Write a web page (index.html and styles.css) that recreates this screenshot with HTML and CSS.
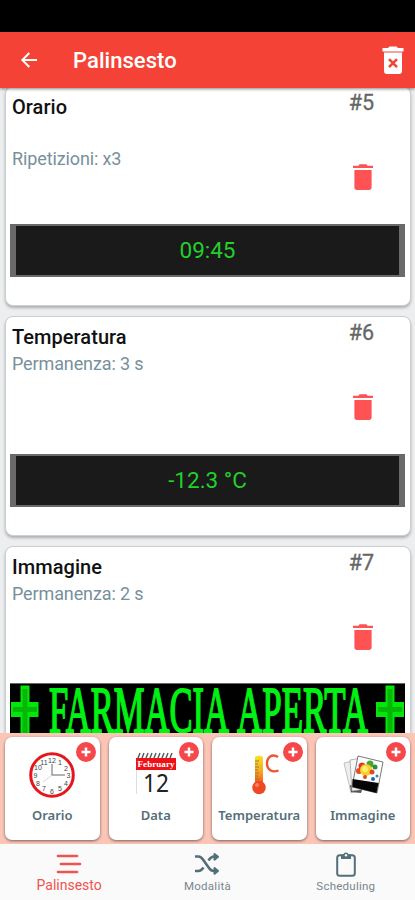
FILE: index.html
```html
<!DOCTYPE html>
<html lang="it">
<head>
<meta charset="utf-8">
<title>Palinsesto</title>
<link rel="stylesheet" href="styles.css">
</head>
<body>
<svg class="defs" width="0" height="0">
  <symbol id="trash" viewBox="0 0 20 26"><path d="M0 1.800h5.400L6.600.3h6.800l1.200 1.500H20V4H0zM1.400 6h17.200v17.200a2.700 2.700 0 0 1-2.700 2.700H4.100a2.700 2.700 0 0 1-2.700-2.700z" fill="currentColor"/></symbol>
  <symbol id="plus" viewBox="0 0 20 20"><circle cx="10" cy="10" r="10" fill="#f4484a"/><path d="M10 5.5v9M5.5 10h9" stroke="#fff" stroke-width="2.500"/></symbol>
</svg>
<div class="app">
  <div class="status"></div>
  <header class="bar">
    <svg class="back" viewBox="0 0 16 16"><path d="M16 8H2M8.3 1 1.3 8l7 7" fill="none" stroke="#fff" stroke-width="2"/></svg>
    <h1>Palinsesto</h1>
    <svg class="clear" viewBox="0 0 22 28"><path d="M.5 2H6L7.500.5h7L16 2h5.500v3.400H.5zM2 6.500h18V25a3 3 0 0 1-3 3H5a3 3 0 0 1-3-3z" fill="#fff"/><path d="m7 13.200 8 8m0-8-8 8" stroke="#f44336" stroke-width="2.600"/></svg>
  </header>
  <main class="list">
    <article class="card">
      <div class="info"><div class="text"><h2>Orario</h2><p></p><p>Ripetizioni: x3</p></div>
      <div class="side"><span>#5</span><svg class="trash"><use href="#trash"/></svg></div></div>
      <div class="display">09:45</div>
    </article>
    <article class="card">
      <div class="info"><div class="text"><h2>Temperatura</h2><p>Permanenza: 3 s</p></div>
      <div class="side"><span>#6</span><svg class="trash"><use href="#trash"/></svg></div></div>
      <div class="display">-12.3 °C</div>
    </article>
    <article class="card picture">
      <div class="info"><div class="text"><h2>Immagine</h2><p>Permanenza: 2 s</p></div>
      <div class="side"><span>#7</span><svg class="trash"><use href="#trash"/></svg></div></div>
      <svg class="banner" viewBox="0 0 395 53">
        <rect width="395" height="53" fill="#000"/><path d="M0 .5h395" stroke="#666"/>
        <g fill="#04e60b"><path d="M10.500 2.500h9V19h9v15h-9v19h-9V34H1V19h9.500z"/><path d="M375.500 2.500h9V19h9.500v15h-9.500v19h-9V34H366V19h9.500z"/></g>
        <path d="M3 26.500h24M368 26.500h24M15 6v46M380 6v46" stroke="#05b808" stroke-width="5"/>
        <text x="39" y="49" textLength="180" lengthAdjust="spacingAndGlyphs">FARMACIA</text>
        <text x="227" y="49" textLength="131" lengthAdjust="spacingAndGlyphs">APERTA</text>
      </svg>
    </article>
  </main>
  <section class="tools">
    <div class="tool"><svg class="plus"><use href="#plus"/></svg>
      <svg class="pic" viewBox="0 0 46 46"><circle cx="23" cy="23" r="21.300" fill="#fff" stroke="#e5171d" stroke-width="3"/>
        <g class="dial"><text x="23" y="11">12</text><text x="31" y="13">1</text><text x="37" y="18.500">2</text><text x="39.500" y="26">3</text><text x="37" y="34">4</text><text x="31" y="39">5</text><text x="23" y="42">6</text><text x="15" y="39">7</text><text x="9" y="34">8</text><text x="6.500" y="26">9</text><text x="9" y="18">10</text><text x="15" y="13">11</text></g>
        <path d="M23 12v11h13" fill="none" stroke="#666"/><path d="M23 23l-9 7" stroke="#bbb" stroke-width=".6"/></svg>
      <span>Orario</span></div>
    <div class="tool"><svg class="plus"><use href="#plus"/></svg>
      <svg class="pic" viewBox="0 0 46 46"><path d="M3.500 18v24" stroke="#ddd"/><path d="M3 6h40v12H3z" fill="#ee1218"/>
        <path d="M5 6l2-5m2 5 2-5m2 5 2-5m2 5 2-5m2 5 2-5m2 5 2-5m2 5 2-5m2 5 2-5m2 5 2-5" stroke="#555" stroke-width="1.400"/>
        <text class="month" x="23" y="14.500" textLength="37">February</text><text class="day" x="23" y="40" textLength="26" lengthAdjust="spacingAndGlyphs">12</text></svg>
      <span>Data</span></div>
    <div class="tool"><svg class="plus"><use href="#plus"/></svg>
      <svg class="pic" viewBox="0 0 46 46"><defs><linearGradient id="heat" x2="0" y2="1"><stop stop-color="#f6e52a"/><stop offset=".55" stop-color="#f5a623"/><stop offset="1" stop-color="#ee4a22"/></linearGradient></defs>
        <path d="M19 5q4-3 8 0v28h-8z" fill="url(#heat)"/><circle cx="23" cy="35.500" r="6.800" fill="#ee4922"/><circle cx="21" cy="33" r="2" fill="#f98258"/>
        <path d="M19 9h4m-4 3h3m-3 3h4m-4 3h3m-3 3h4m-4 3h3m-3 3h4" stroke="#a67a25" stroke-width="1.200"/>
        <path d="M42 5c-6-4-11 .5-11 6.500S36 21 42.500 18.500" fill="none" stroke="#ea5630" stroke-width="2.400"/></svg>
      <span>Temperatura</span></div>
    <div class="tool"><svg class="plus"><use href="#plus"/></svg>
      <svg class="pic" viewBox="0 0 46 46"><path d="m4 11 9-2 5 30-7 2z" fill="#eee" stroke="#aaa" stroke-width=".7"/><path d="m10 33 13 2-2 6-10-1z" fill="#555"/><path d="m10 8 12-2 4 31-14 2z" fill="#f6f6f6" stroke="#999" stroke-width=".7"/>
        <path d="m18 4 25 6-6 31-25-6z" fill="#fff" stroke="#555" stroke-width=".8"/><path d="m12.500 27 26 4-2 10-24-6z" fill="#050505"/>
        <circle cx="22" cy="14" r="3.500" fill="#df3826"/><circle cx="19" cy="19" r="3" fill="#e04a24"/><circle cx="30" cy="12" r="3.500" fill="#49a52d"/><circle cx="35" cy="15" r="2.500" fill="#2c8f3b"/><circle cx="26" cy="18" r="6" fill="#f8cf2c"/><circle cx="25" cy="17" r="3" fill="#fff06c"/><circle cx="32" cy="20" r="2.500" fill="#e3472b"/><circle cx="33" cy="27" r="2" fill="#2465b1"/><circle cx="37" cy="24" r="1.500" fill="#3b83c4"/><circle cx="25" cy="25" r="2" fill="#de4b2c"/></svg>
      <span>Immagine</span></div>
  </section>
  <nav class="nav">
    <a class="active"><svg viewBox="0 0 26 22"><path d="M2 3h19M5 11h19M2 19h19" stroke="currentColor" stroke-width="2.700" stroke-linecap="round"/></svg><span>Palinsesto</span></a>
    <a><svg viewBox="0 0 26 22"><path d="M1 3.500h3.500c2.500 0 3.500 1.600 5 3.800L15 15c1.300 2 2.500 3 5 3h2M1 18h3.500c2.500 0 3.500-1.300 5-3.500m5-7C16 5.200 17.300 3.500 20 3.500h2" fill="none" stroke="currentColor" stroke-width="2.600"/><path d="m20.500 1 3.500 2.800-3.500 2.900zm0 14 3.500 2.900-3.500 2.900z" fill="currentColor" stroke="currentColor" stroke-width="2" stroke-linejoin="round"/></svg><span>Modalità</span></a>
    <a><svg class="clip" viewBox="0 0 20 26"><rect x="1.200" y="4.300" width="17.600" height="20.400" rx="2.500" fill="none" stroke="currentColor" stroke-width="2"/><path d="M5 3.500h2.300a2.800 2.800 0 0 1 5.400 0H15V8H5z" fill="currentColor"/><circle cx="10" cy="4.300" r="1.200" fill="#fafafa"/></svg><span>Scheduling</span></a>
  </nav>
</div>
</body>
</html>
```
FILE: styles.css
```css
* { box-sizing: border-box; }
body { margin: 0; font-family: Roboto, sans-serif; background: #f0f2f3; }
h1, h2, p { margin: 0; }
.defs { position: absolute; }
.app { width: 415px; height: 900px; display: grid; grid-template-rows: 32px 56px 645px 111px 56px; overflow: hidden; }
.status { background: #000; }
.bar { background: #f44336; display: flex; align-items: center; padding: 0 12px 0 21px; box-shadow: 0 1px 3px #0007; z-index: 1; }
.back { width: 16px; height: 16px; }
.bar h1 { flex: 1; margin-left: 36px; color: #fff; font-size: 22px; font-weight: 500; letter-spacing: .05px; }
.clear { width: 22px; height: 28px; margin-right: -1px; }
.list { overflow: hidden; padding: 0 4px 0 5px; display: flex; flex-direction: column; gap: 10px; background: #eceeef; }
.card { flex: 0 0 220px; background: #fff; border: 1px solid #cdd0d1; border-radius: 8px; box-shadow: 0 2px 3px #0004; padding: 0 5px 0 4px; }
.card:first-child { margin-top: -2px; }
.info { height: 137px; display: flex; justify-content: space-between; }
.picture .info { height: 136px; }
.text { padding: 8px 0 0 2px; }
.text h2 { font-size: 20px; line-height: 25px; font-weight: 500; color: #111; letter-spacing: .05px; }
.text p { height: 25px; line-height: 27px; font-size: 18px; color: #78909c; letter-spacing: -.12px; }
.side { width: 84px; display: flex; flex-direction: column; align-items: center; color: #666; font-size: 21.500px; }
.side span { line-height: 26px; margin: 3px 3px 0 0; -webkit-text-stroke: .3px #666; }
.trash { width: 20px; height: 26px; margin-top: 48px; color: #ff5252; }
.display { height: 53px; background: #1a1a1a; border: solid #6a6a6a; border-width: 2px 6px; color: #23cf2b; font-size: 22.500px; line-height: 49px; text-align: center; }
.banner { display: block; width: 395px; height: 53px; }
.banner text { font: 65px "Liberation Serif", serif; fill: #00f313; stroke: #00f313; stroke-width: 1.800px; }
.tools { background: #fcc6b7; padding: 4px 5px; display: grid; grid-template-columns: repeat(4, 94.500px); gap: 9px; }
.tool { position: relative; background: #fff; border-radius: 7px; box-shadow: 0 1px 3px #0008; display: flex; flex-direction: column; align-items: center; padding-top: 15px; }
.plus { position: absolute; right: 4px; top: 5px; width: 20px; height: 20px; }
.pic { width: 46px; height: 46px; }
.tool span { margin-top: 8px; font: 600 13px/18px "Noto Sans", sans-serif; color: #546e7a; }
.dial { font: 7px "Liberation Sans", sans-serif; fill: #444; text-anchor: middle; }
.month { font: bold 9px "Liberation Serif", serif; fill: #fff; text-anchor: middle; }
.day { font: 25px "Noto Sans", sans-serif; fill: #222; text-anchor: middle; }
.nav { background: #fafafa; display: grid; grid-template-columns: repeat(3, 1fr); }
.nav a { display: flex; flex-direction: column; align-items: center; padding-top: 9px; color: #546e7a; }
.nav svg { width: 26px; height: 22px; }
.nav .clip { width: 20px; height: 26px; margin: -2px 0; }
.nav span { font-size: 11.500px; line-height: 16px; margin-top: 3px; letter-spacing: .25px; color: #78868d; }
.nav .active { color: #ef5350; }
.nav .active span { color: #ef5350; font-size: 14px; margin-top: 2px; letter-spacing: 0; }
```
